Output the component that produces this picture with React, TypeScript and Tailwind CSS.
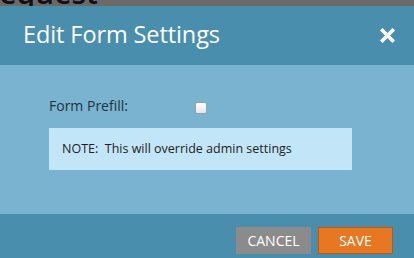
import React from 'react'

const EditFormSettings = () => {
  return (
    <div className="w-[414px] h-[258px] overflow-hidden bg-[#79b3cf] font-['Open_Sans',sans-serif]">
      {/* page behind the dialog */}
      <div className="h-[6px] overflow-hidden bg-[#6a6a6a]">
        <div className="-mt-[22px] -ml-[20px] text-[30px] leading-[30px] text-[#111] font-semibold whitespace-nowrap">Request</div>
      </div>

      <div className="h-[59px] bg-[#4a8eae] flex items-center justify-between pl-[23px] pr-[19px]">
        <h2 className="text-[23.5px] text-white leading-none -mt-[1px] tracking-[-0.1px]">Edit Form Settings</h2>
        <svg width="15" height="15" viewBox="0 0 15 15" className="-mt-[1px]">
          <path d="M2.5 2.5 L12.5 12.5 M12.5 2.5 L2.5 12.5" stroke="#fff" strokeWidth="3.6" strokeLinecap="square" />
        </svg>
      </div>

      <div className="h-[149px] bg-[#79b3cf] pl-[49px] pt-[30px]">
        <div className="flex items-center h-[20px]">
          <span className="w-[146px] text-[14px] text-[#1d3440]">Form Prefill:</span>
          <span className="mt-[6px] w-[12px] h-[12px] rounded-[2px] border border-[#8aa4b4] bg-gradient-to-b from-[#ffffff] to-[#e6e6e6]" />
        </div>
        <div className="mt-[13px] w-[303px] h-[42px] bg-[#c3e5f8] flex items-center pl-[13px]">
          <span className="text-[12.5px] text-[#222]">NOTE:&nbsp; This will override admin settings</span>
        </div>
      </div>

      <div className="h-[45px] bg-[#4a8eae] flex justify-end items-start pt-[13px] pr-[21px] gap-[7px]">
        <button className="w-[75px] h-[27px] bg-[#8b8b8b] text-white text-[14px] leading-none">CANCEL</button>
        <button className="w-[75px] h-[27px] bg-[#e87722] border border-[#b85a17] text-white text-[14px] leading-none">SAVE</button>
      </div>
    </div>
  )
}

export default function App() {
  return <EditFormSettings />
}
